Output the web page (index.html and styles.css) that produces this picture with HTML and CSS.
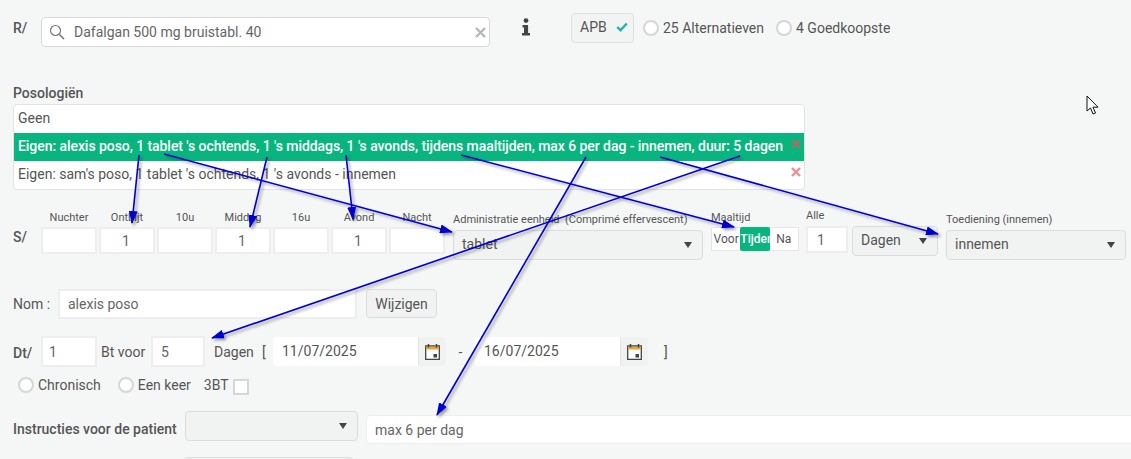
FILE: index.html
```html
<!DOCTYPE html>
<html lang="nl">
<head>
<meta charset="utf-8">
<title>Posologie</title>
<link rel="stylesheet" href="styles.css">
</head>
<body>
<main class="page">
  <section class="row row-r">
    <span class="lead lead-r">R/</span>
    <div class="search">
      <svg class="search-icon" width="16" height="16" viewBox="0 0 16 16"><circle cx="6.500" cy="6.500" r="5" fill="none" stroke="#777" stroke-width="1.200"/><path d="M10.200 10.200 15 15" stroke="#777" stroke-width="1.600"/></svg>
      <span class="search-text">Dafalgan 500 mg bruistabl. 40</span>
      <svg class="search-clear" width="11" height="11" viewBox="0 0 11 11"><path d="M1 1l9 9M10 1l-9 9" stroke="#b4b8b8" stroke-width="2.400"/></svg>
    </div>
    <svg class="info" width="10" height="18" viewBox="0 0 10 18"><circle cx="5" cy="2.600" r="2.400" fill="#444"/><path d="M1.500 7h5.600v8H9v2.600H1v-2.600h2V9.400H1.500z" fill="#444"/></svg>
    <div class="apb">APB <svg width="12" height="10" viewBox="0 0 12 10"><path d="M1.200 5 4.500 8.200 10.800 1.500" fill="none" stroke="#1fb5ad" stroke-width="2.400"/></svg></div>
    <label class="radio-item radio-alt"><span class="radio"></span>25 Alternatieven</label>
    <label class="radio-item radio-cheap"><span class="radio"></span>4 Goedkoopste</label>
  </section>

  <section class="poso">
    <h2 class="poso-title">Posologiën</h2>
    <ul class="poso-list">
      <li class="poso-item">Geen</li>
      <li class="poso-item poso-active">Eigen: alexis poso, 1 tablet 's ochtends, 1 's middags, 1 's avonds, tijdens maaltijden, max 6 per dag - innemen, duur: 5 dagen<svg class="del" width="10" height="10" viewBox="0 0 10 10"><path d="M1 1l8 8M9 1l-8 8" stroke="#a9705f" stroke-width="2.400"/></svg></li>
      <li class="poso-item">Eigen: sam's poso, 1 tablet 's ochtends, 1 's avonds - innemen<svg class="del" width="10" height="10" viewBox="0 0 10 10"><path d="M1 1l8 8M9 1l-8 8" stroke="#ec8f9a" stroke-width="2.400"/></svg></li>
    </ul>
  </section>

  <section class="row row-s">
    <span class="lead lead-s">S/</span>
    <div class="dose"><span class="cap">Nuchter</span><input class="dose-input" value=""></div>
    <div class="dose"><span class="cap">Ontbijt</span><input class="dose-input" value="1"></div>
    <div class="dose"><span class="cap">10u</span><input class="dose-input" value=""></div>
    <div class="dose"><span class="cap">Middag</span><input class="dose-input" value="1"></div>
    <div class="dose"><span class="cap">16u</span><input class="dose-input" value=""></div>
    <div class="dose"><span class="cap">Avond</span><input class="dose-input" value="1"></div>
    <div class="dose"><span class="cap">Nacht</span><input class="dose-input" value=""></div>
    <div class="field field-unit"><span class="cap-left">Administratie eenheid&nbsp; (Comprimé effervescent)</span><div class="select select-unit">tablet</div></div>
    <div class="field field-meal"><span class="cap-left">Maaltijd</span>
      <div class="seg"><span class="seg-item">Voor</span><span class="seg-item seg-on">Tijden</span><span class="seg-item">Na</span></div>
    </div>
    <div class="field field-every"><span class="cap-left">Alle</span><input class="every-input" value="1"></div>
    <div class="select select-days">Dagen</div>
    <div class="field field-admin"><span class="cap-left">Toediening (innemen)</span><div class="select select-admin">innemen</div></div>
  </section>

  <section class="row row-nom">
    <span class="nom-label">Nom :</span>
    <input class="nom-input" value="alexis poso">
    <button class="btn" type="button">Wijzigen</button>
  </section>

  <section class="row row-dt">
    <span class="lead lead-dt">Dt/</span>
    <input class="small-input" value="1">
    <span class="txt txt-bt">Bt voor</span>
    <input class="small-input small-narrow" value="5">
    <span class="txt txt-dagen">Dagen</span>
    <span class="txt txt-open">[</span>
    <div class="date"><span class="date-text">11/07/2025</span><span class="date-add"><svg width="15" height="16" viewBox="0 0 15 16"><path d="M.7 2h13.600v13.300H.7z" fill="#fff" stroke="#444" stroke-width="1.300"/><path d="M1 2.500h13v3H1z" fill="#e8a33d"/><path d="M3.500 0v3.500M11.500 0v3.500" stroke="#444" stroke-width="1.500"/><path d="M8.500 10h3.500v3.500H8.500z" fill="#444"/></svg></span></div>
    <span class="txt txt-dash">-</span>
    <div class="date"><span class="date-text">16/07/2025</span><span class="date-add"><svg width="15" height="16" viewBox="0 0 15 16"><path d="M.7 2h13.600v13.300H.7z" fill="#fff" stroke="#444" stroke-width="1.300"/><path d="M1 2.500h13v3H1z" fill="#e8a33d"/><path d="M3.500 0v3.500M11.500 0v3.500" stroke="#444" stroke-width="1.500"/><path d="M8.500 10h3.500v3.500H8.500z" fill="#444"/></svg></span></div>
    <span class="txt txt-close">]</span>
  </section>

  <section class="row row-opts">
    <label class="radio-item"><span class="radio"></span>Chronisch</label>
    <label class="radio-item radio-once"><span class="radio"></span>Een keer</label>
    <span class="txt txt-3bt">3BT</span>
    <span class="check"></span>
  </section>

  <section class="row row-instr">
    <span class="instr-label">Instructies voor de patient</span>
    <div class="select select-instr"></div>
    <input class="instr-input" value="max 6 per dag">
  </section>

  <div class="select select-next"></div>
</main>

<svg class="arrows" width="1131" height="459" viewBox="0 0 1131 459">
  <defs>
    <marker id="head" markerWidth="13" markerHeight="9" refX="12" refY="4.500" orient="auto" markerUnits="userSpaceOnUse"><path d="M0 0 13 4.500 0 9z" fill="#0000cc"/></marker>
    <filter id="shade" x="-20%" y="-20%" width="140%" height="140%"><feDropShadow dx="2" dy="2" stdDeviation="1.500" flood-color="#000" flood-opacity=".4"/></filter>
  </defs>
  <g class="arrow-lines" filter="url(#shade)">
    <path d="M139 155 132 223" marker-end="url(#head)"/>
    <path d="M164 154 452 232" marker-end="url(#head)"/>
    <path d="M267 157 250 227" marker-end="url(#head)"/>
    <path d="M346 155 353 219" marker-end="url(#head)"/>
    <path d="M461 155 734 227" marker-end="url(#head)"/>
    <path d="M586 157 437 415" marker-end="url(#head)"/>
    <path d="M740 156 212 338" marker-end="url(#head)"/>
    <path d="M660 157 938 234" marker-end="url(#head)"/>
  </g>
</svg>
<svg class="cursor" width="14" height="20" viewBox="0 0 14 20"><path d="M1 1v15l3.500-3 2.500 6 2.500-1-2.500-5.800H12z" fill="#fff" stroke="#111" stroke-width="1"/></svg>
</body>
</html>
```

FILE: styles.css
```css
* { box-sizing: border-box; }
html, body { margin: 0; height: 459px; overflow: hidden; }
body {
  position: relative;
  background: #f5f7f7;
  color: #555;
  font: 14px/20px Roboto, "Liberation Sans", sans-serif;
}
.page { height: 459px; overflow: hidden; padding-left: 13px; }
.row { display: flex; align-items: flex-start; white-space: nowrap; }
.row > * { flex-shrink: 0; }
.lead { font-weight: 500; color: #555; }

.row-r { height: 47px; }
.lead-r { width: 28px; margin-top: 18px; }
.search {
  display: flex; align-items: center;
  width: 449px; height: 30px; margin-top: 17px; padding: 0 3px 0 7px;
  background: #fff; border: 1px solid #d8d8d8; border-radius: 4px;
}
.search-text { flex: 1; margin-left: 9px; color: #666; }
.info { margin: 18px 0 0 31px; }
.apb {
  display: flex; align-items: center; gap: 9px;
  width: 63px; height: 30px; margin: 13px 0 0 40px; padding: 0 0 2px 8px;
  background: #f2f3f3; border: 1px solid #e0e0e0; border-radius: 4px; color: #555;
}
.radio-item { display: flex; align-items: center; gap: 4px; color: #555; }
.radio-alt { margin: 18px 0 0 9px; }
.radio-cheap { margin: 18px 0 0 12px; }
.radio { width: 16px; height: 16px; background: #fff; border: 2px solid #d6d6d6; border-radius: 50%; }

.poso { height: 163px; padding-top: 36px; }
.poso-title { margin: 0; height: 21px; font-size: 14px; line-height: 20px; font-weight: 500; color: #555; }
.poso-list { width: 792px; margin: 0; padding: 0; list-style: none; background: #fff; border: 1px solid #e2e2e2; border-radius: 4px; }
.poso-item { position: relative; height: 28px; padding: 3px 4px; line-height: 20px; color: #555; white-space: nowrap; }
.poso-active { background: #08b57e; color: #fff; font-weight: 500; letter-spacing: -.06px; }
.del { position: absolute; right: 3px; top: 6px; }

.row-s { height: 79px; }
.lead-s { width: 28px; margin-top: 17px; }
.dose { width: 56px; margin-right: 2px; display: flex; flex-direction: column; align-items: center; }
.cap { height: 18px; margin-top: -1px; font-size: 11px; line-height: 18px; color: #555; }
.dose-input {
  width: 56px; height: 27px; padding: 0 2px 0 0; text-align: center;
  font: 14px Roboto, sans-serif; color: #666;
  background: #fff; border: 2px solid #eeeeee; outline: 0;
}
.field { display: flex; flex-direction: column; }
.cap-left { height: 20px; font-size: 11px; line-height: 20px; color: #555; }
.field-unit { width: 250px; margin-left: 6px; }
.select {
  position: relative; height: 30px; padding-left: 8px; line-height: 27px; font-size: 14px; color: #555;
  background: #f1f2f2; border: 1px solid #dcdcdc; border-radius: 4px;
}
.select::after {
  content: ""; position: absolute; right: 10px; top: 11px;
  border-left: 4px solid transparent; border-right: 4px solid transparent; border-top: 6px solid #444;
}
.select-unit { width: 250px; }
.field-meal { width: 88px; margin: -2px 0 0 8px; }
.seg { display: flex; height: 24px; margin-top: -1px; background: #fff; border: 1px solid #e6e6e6; font-size: 12px; line-height: 22px; color: #555; }
.seg-item { width: 29px; text-align: center; overflow: hidden; }
.seg-on { width: 30px; margin: -1px 0; height: 24px; line-height: 24px; background: #08b57e; color: #fff; font-weight: 500; border-radius: 2px; }
.field-every { width: 42px; margin: -4px 0 0 7px; }
.every-input { width: 42px; height: 27px; padding: 0 0 0 9px; font: 14px Roboto, sans-serif; color: #666; background: #fff; border: 2px solid #eeeeee; outline: 0; }
.select-days { width: 86px; margin: 16px 0 0 4px; }
.field-admin { width: 180px; margin-left: 8px; }
.select-admin { width: 180px; }

.row-nom { height: 47px; }
.nom-label { width: 45px; margin-top: 5px; }
.nom-input { width: 299px; height: 30px; padding: 0 8px; font: 14px Roboto, sans-serif; color: #666; background: #fff; border: 2px solid #eeeeee; outline: 0; }
.btn { width: 71px; height: 29px; margin-left: 9px; padding: 0; font: 14px Roboto, sans-serif; color: #555; background: #f1f2f2; border: 1px solid #dcdcdc; border-radius: 4px; }

.row-dt { align-items: center; height: 31px; }
.lead-dt { width: 28px; margin-top: 2px; }
.small-input { width: 56px; height: 31px; padding: 0 0 0 6px; font: 14px Roboto, sans-serif; color: #666; background: #fff; border: 2px solid #eeeeee; outline: 0; }
.small-narrow { width: 54px; padding-left: 8px; }
.txt { color: #555; }
.txt-bt { width: 46px; margin: 0 4px 0 4px; }
.txt-dagen { width: 40px; margin-left: 9px; }
.txt-open { width: 11px; margin-left: 8px; }
.date { display: flex; width: 173px; height: 29px; background: #fff; border-radius: 4px; overflow: hidden; }
.date-text { flex: 1; padding-left: 9px; line-height: 29px; color: #555; }
.date-add { display: flex; align-items: center; justify-content: center; width: 28px; background: #f0f1f1; border-left: 1px solid #e4e4e4; }
.txt-dash { width: 29px; text-align: center; }
.txt-close { margin-left: 16px; }

.row-opts { align-items: center; height: 30px; margin-top: 3px; padding-left: 5px; }
.radio-once { margin-left: 17px; }
.txt-3bt { margin-left: 13px; }
.check { width: 16px; height: 16px; margin: 3px 0 0 4px; background: #fff; border: 2px solid #d6d6d6; }

.row-instr { height: 34px; margin-top: 11px; }
.instr-label { width: 172px; margin-top: 8px; font-weight: 500; color: #555; }
.select-instr { width: 173px; }
.instr-input { width: 780px; height: 29px; margin: 4px 0 0 8px; padding: 0 8px; font: 14px Roboto, sans-serif; color: #666; background: #fff; border: 1px solid #eee; border-radius: 4px; outline: 0; }
.select-next { width: 171px; margin: 12px 0 0 170px; }

.arrows { position: absolute; left: 0; top: 0; pointer-events: none; }
.arrow-lines path { fill: none; stroke: #0000cc; stroke-width: 1.600; }
.cursor { position: absolute; left: 1086px; top: 95px; }
```
